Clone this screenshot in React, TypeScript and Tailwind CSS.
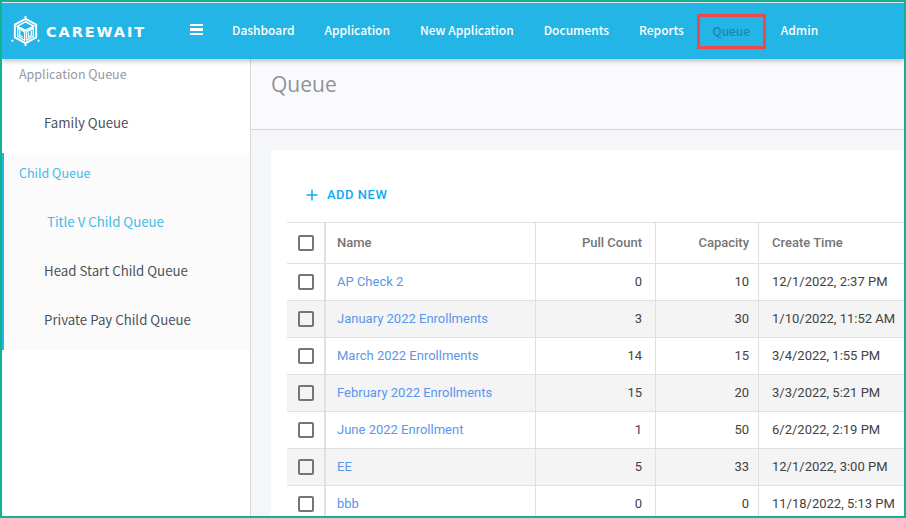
const rows = [
  ["AP Check 2", "0", "10", "12/1/2022, 2:37 PM"],
  ["January 2022 Enrollments", "3", "30", "1/10/2022, 11:52 AM"],
  ["March 2022 Enrollments", "14", "15", "3/4/2022, 1:55 PM"],
  ["February 2022 Enrollments", "15", "20", "3/3/2022, 5:21 PM"],
  ["June 2022 Enrollment", "1", "50", "6/2/2022, 2:19 PM"],
  ["EE", "5", "33", "12/1/2022, 3:00 PM"],
  ["bbb", "0", "0", "11/18/2022, 5:13 PM"],
];
const sans = "font-['Noto_Sans_CJK_SC','Noto_Sans',sans-serif]";

function Logo() {
  return (
    <svg width="32" height="32" viewBox="0 0 32 32" fill="none" stroke="white" strokeWidth="1.6">
      <path d="M16 3.5 27 9.5V22.5L16 28.5 5 22.5V9.5Z" strokeWidth="2" />
      <path d="M16 6.5 24.5 11 16 15.5 7.5 11Z" />
      <path d="M8 13V21.5L15 25.5V17L8 13Z" strokeWidth="1.3" />
      <path d="M17 17V25.5L24 21.5V13Z" strokeWidth="1.3" />
      <path d="M19 17.5V22.5L20.5 21.5 22 20.5V15.5" strokeWidth="1.3" />
      <path d="M10 15.5V20.5L13 22.5" strokeWidth="1.3" />
      <rect x="15" y="0.5" width="2" height="2" fill="white" stroke="none" />
      <rect x="1.5" y="25" width="2" height="2" fill="white" stroke="none" />
      <rect x="28.5" y="25" width="2" height="2" fill="white" stroke="none" />
      <rect x="15" y="29.5" width="2" height="2" fill="white" stroke="none" />
    </svg>
  );
}

function Box() {
  return <span className="block w-4 h-4 border-2 border-[#757575] rounded-[2px] bg-transparent" />;
}

export default function App() {
  return (
    <div className="w-[906px] h-[518px] overflow-hidden border-[2px] border-[#10b28f] flex flex-col bg-white">
      <header className={`h-[57px] shrink-0 border-t border-[#dfe7ea] bg-[#23b5e5] flex items-center relative z-10 shadow-[0_2px_5px_rgba(0,0,0,0.25)] ${sans}`}>
        <div className="ml-[8px] w-[136px] flex items-center gap-[5px] shrink-0">
          <Logo />
          <span className="font-['DejaVu_Sans',sans-serif] font-bold text-white text-[14.5px] leading-none tracking-[1.9px] mt-[2px]">CAREWAIT</span>
        </div>
        <div className="ml-[44px] w-[13px] flex flex-col gap-[2px] shrink-0 mt-[-3px]">
          <span className="h-[2.5px] bg-white block" />
          <span className="h-[2.5px] bg-white block" />
          <span className="h-[2.5px] bg-white block" />
        </div>
        <nav className="ml-[29px] flex items-center text-[12px] font-medium text-white">
          <a className="mr-[30px] mt-[-2px]">Dashboard</a>
          <a className="mr-[30px] mt-[-2px]">Application</a>
          <a className="mr-[30px] mt-[-2px]">New Application</a>
          <a className="mr-[30px] mt-[-2px]">Documents</a>
          <a className="mr-[13px] mt-[-2px]">Reports</a>
          <a className="w-[69px] h-[35px] border-[3px] border-[#f04848] flex items-center justify-center text-[#1a87ae] mr-[15px] pb-[1px]">Queue</a>
          <a className="mt-[-2px]">Admin</a>
        </nav>
      </header>
      <div className="flex flex-1 min-h-0">
        <aside className={`w-[249px] shrink-0 border-r border-[#d5d8dc] bg-white text-[13.25px] ${sans}`}>
          <div className="h-[29px] pl-[17px] pt-[7px] leading-[15px] text-[12.5px] text-[#959aa1]">Application Queue</div>
          <div className="h-[65px] pl-[42px] flex items-center pt-[5px] text-[#4d5259]">Family Queue</div>
          <div className="h-[197px] bg-[#fbfbfc] border-l-[2px] border-[#23b5e5]">
            <div className="h-[44px] pl-[15px] flex items-center text-[12.5px] text-[#3dbce8] pb-[4px]">Child Queue</div>
            <div className="h-[49px] pl-[43px] flex items-center text-[#3dbce8]">Title V Child Queue</div>
            <div className="h-[49px] pl-[40px] flex items-center text-[#4d5259]">Head Start Child Queue</div>
            <div className="h-[49px] pl-[40px] flex items-center text-[#4d5259]">Private Pay Child Queue</div>
          </div>
        </aside>
        <main className="flex-1 min-w-0 bg-[#f5f6fa] overflow-hidden">
          <div className="h-[71px] bg-[#fafafc] border-b border-[#cdd8dd] pl-[20px] pt-[10px] text-[21px] leading-[30px] text-[#8d9399] font-['Open_Sans',sans-serif]">Queue</div>
          <div className="mt-[20px] ml-[20px] w-[700px] h-[400px] bg-white pl-[16px] font-['Roboto',sans-serif]">
            <div className="h-[72px] pl-[19px] pt-[36px] flex items-start gap-[9px] text-[#12a8ef]">
              <svg className="mt-[3px]" width="12" height="12" viewBox="0 0 12 12" stroke="currentColor" strokeWidth="1.5"><path d="M6 0.5V11.5M0.5 6H11.5" /></svg>
              <span className="text-[13px] font-medium tracking-[0.5px] leading-[18px]">ADD NEW</span>
            </div>
            <div className="border-t border-[#e0e0e0] text-[13px]">
              <div className="grid grid-cols-[39px_210px_120px_103px_1fr] h-[41px] border-b border-[#e0e0e0] font-medium text-[#757575]">
                <div className="border-r-2 border-[#e0e0e0] flex items-center pl-[11px]"><Box /></div>
                <div className="border-r border-[#e0e0e0] flex items-center pl-[11px]">Name</div>
                <div className="border-r border-[#e0e0e0] flex items-center justify-end pr-[13px]">Pull Count</div>
                <div className="border-r border-[#e0e0e0] flex items-center justify-end pr-[9px]">Capacity</div>
                <div className="flex items-center pl-[13px]">Create Time</div>
              </div>
              {rows.map((r, i) => (
                <div key={r[0]} className={`grid grid-cols-[39px_210px_120px_103px_1fr] h-[37px] border-b border-[#e0e0e0] text-[#424242] ${i % 2 ? "bg-[#f4f4f4]" : "bg-white"}`}>
                  <div className="border-r-2 border-[#e0e0e0] flex items-center pl-[11px]"><Box /></div>
                  <div className="border-r border-[#e0e0e0] flex items-center pl-[11px] text-[#5b96ea]">{r[0]}</div>
                  <div className="border-r border-[#e0e0e0] flex items-center justify-end pr-[13px]">{r[1]}</div>
                  <div className="border-r border-[#e0e0e0] flex items-center justify-end pr-[9px]">{r[2]}</div>
                  <div className="flex items-center pl-[13px]">{r[3]}</div>
                </div>
              ))}
            </div>
          </div>
        </main>
      </div>
    </div>
  );
}
